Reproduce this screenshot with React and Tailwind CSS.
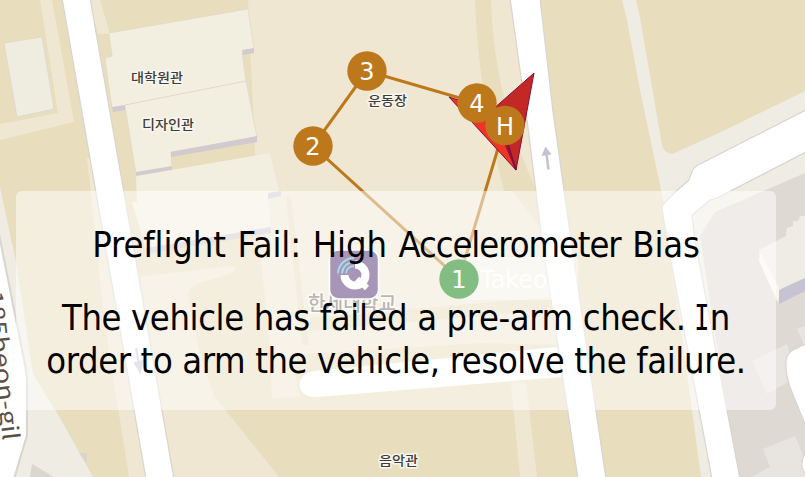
const LABEL_FONT = '"Noto Sans CJK KR", sans-serif';

function MapLabel({ x, y, width, size = 13, fill = "#3f3d3a", children }) {
  return (
    <text
      x={x}
      y={y}
      textLength={width}
      lengthAdjust="spacingAndGlyphs"
      fontSize={size}
      fontWeight="500"
      fontFamily={LABEL_FONT}
      fill={fill}
      stroke="#f8f6ee"
      strokeWidth="3"
      strokeLinejoin="round"
      paintOrder="stroke"
    >
      {children}
    </text>
  );
}

function Waypoint({ x, y, label, fill = "#bd781b" }) {
  return (
    <g>
      <circle cx={x} cy={y} r="19.7" fill={fill} />
      <text
        x={x}
        y={y + 9}
        textAnchor="middle"
        fontSize="24"
        fontFamily='"DejaVu Sans", sans-serif'
        fill="#fff"
      >
        {label}
      </text>
    </g>
  );
}

function MapCanvas() {
  return (
    <svg className="col-start-1 row-start-1 block" width="805" height="477" viewBox="0 0 805 477">
      <rect width="805" height="477" fill="#e8ddbd" />

      {/* campus footpaths and the sports field */}
      <path d="M40 0H52L74 122L0 140V124L58 113Z" fill="#efe7d2" />
      <path d="M89 0H100L110 34H98Z" fill="#efe7d2" />
      <path d="M87 158H104L133 310L173 477H129L105 325Z" fill="#efe7d2" />
      <path d="M248 0H475L508 185L550 240L557 346L481 350L272 399L271 355L259 240Z" fill="#efe7d2" />
      <path d="M286 197L291 197L309 345H302Z" fill="#e8ddbd" />
      <path d="M475 0H491Q494 100 537 191H504Q478 90 475 0Z" fill="#e8ddbd" />
      <path d="M491 0H515L547 191H537Q494 100 491 0Z" fill="#efe7d2" />
      <path d="M310 318L562 296V308L481 316L310 331Z" fill="#e8ddbd" />
      <path d="M272 399L271 356L481 343L560 345V406Z" fill="#e8ddbd" />
      <path d="M271 356L290 354L300 396L272 399Z" fill="#efe7d2" />
      <path d="M140 277L230 266Q238 267 232 273L203 282Q188 286 188 295C194 335 204 371 215 397L271 467L279 477H170L150 375Z" fill="#efe7d2" />
      <path d="M511 382H526L537 477H520Z" fill="#efe7d2" />

      {/* academic buildings */}
      <path d="M4 43L42 37L54 109L17 117Z" fill="#efece0" stroke="#ddd7ca" strokeWidth=".7" />
      <path d="M109 33L248 9L254 50L242 53L246 81L257 137L171 152L172 167L136 174L125 106L112 108L105 58L112 56Z" fill="#f3efe0" stroke="#ded8ca" strokeWidth=".7" />
      <path d="M112 107L125 105V110L113 112ZM242 50L254 48V53L243 55ZM171 152L257 136V142L171 157ZM136 172L172 166V171L136 177Z" fill="#d1cacf" />
      <path d="M125 105L246 81" stroke="#d8d1cb" strokeWidth=".8" />
      <path d="M136 176L270 153L280 195L268 198L272 232L146 250L132 202H137Z" fill="#f3efe0" />
      <path d="M268 193L281 191V196L268 199ZM146 248L271 227V233L146 254Z" fill="#d1cacf" />

      {/* eastern block */}
      <path d="M622 0H636L640 18L662 145Q664 153 672 154L719 133L805 91V477H701L664 204L640 90L627 20Z" fill="#efece3" />
      <path d="M715 212L805 173V477H737L700 236Z" fill="#dfd9d3" />
      <path d="M805 216L800 216L798 221L793 221V226L787 228L786 233L786 236L759 250L760 262L779 290L805 278Z" fill="#eeece4" />
      <path d="M760 252L780 290L778 303L759 261Z" fill="#f8f6ef" />
      <path d="M779 290L805 278V291L779 304Z" fill="#c6c3d3" />
      <path d="M752 361L787 344L795 378L767 394ZM797 329L805 326V347ZM763 449L795 436L805 460V477H751L770 467Z" fill="#e8e5e0" />

      {/* roads */}
      <g fill="#fff" stroke="#d9d4ce" strokeWidth="1.2">
        <path d="M62 -2L146 479H174L90 -2Z" />
        <path d="M510 -2L527 120L542 240L578 479H606L571 240L553 112L540 -2Z" />
        <path d="M662 208Q662 203 688 181C691 178 690 173 694 168Q697 165 702 163L808 109V151L717 198L710 200L692 215L695 240L740 479H712L667 240Z" />
        <path d="M808 343L793 350Q786 354 786 363C785 380 792 392 808 431Z" />
        <path d="M808 449Q801 456 802 468L808 479Z" />
      </g>
      <path d="M315 371L557 347L561 377L317 397C295 398 293 374 315 371Z" fill="#fff" />
      <path d="M0 187L16 262L33 374L60 418L93 477H0Z" fill="#efece3" />
      <path d="M-2 229L24 360Q27 373 27 384V435L14 479H-2Z" fill="#fff" stroke="#d9d4ce" strokeWidth="2" />
      <path d="M32 464L54 477H30Z" fill="#dcd6d0" />
      <path d="M79 453H87V464Z" fill="#dcd4c8" />
      <path d="M548.500 169.500L546.500 154" fill="none" stroke="#c6c3d0" strokeWidth="2.500" />
      <path d="M541.500 156L545.500 146.500L551.500 154.500Z" fill="#c6c3d0" />
      <path d="M136 348L139 365M135 363L140 372L143 361Z" fill="#cbc8d4" stroke="#cbc8d4" strokeWidth="2" />

      <text
        transform="translate(-14 292) rotate(83.5)"
        fontSize="23"
        textLength="150"
        lengthAdjust="spacingAndGlyphs"
        fontFamily='"Noto Sans CJK KR", sans-serif'
        fontWeight="400"
        fill="#5b5048"
      >
        185beon-gil
      </text>

      <MapLabel x="131" y="82" width="52">대학원관</MapLabel>
      <MapLabel x="142" y="129" width="52">디자인관</MapLabel>
      <MapLabel x="368" y="105" width="39">운동장</MapLabel>
      <MapLabel x="379" y="465" width="39">음악관</MapLabel>
      <MapLabel x="308" y="311" width="88" size={20} fill="#706b65">한세대학교</MapLabel>

      {/* university badge */}
      <rect x="329.5" y="250" width="49" height="49" rx="9" fill="#4f2d71" stroke="#fff" strokeWidth="1.5" />
      <path d="M355 264.500A10.500 10.500 0 1 1 344.500 275" fill="none" stroke="#fff" strokeWidth="8" />
      <path d="M357 279L367 288" stroke="#fff" strokeWidth="6" />
      <path d="M338 273.500A16 16 0 0 1 354 258M342 273.500A12 12 0 0 1 354 262M346 273.500A8 8 0 0 1 354 266" fill="none" stroke="#4cb8e0" strokeWidth="1.800" />

      {/* mission path */}
      <path d="M459 279L313 146L367 71L477 103M505 125L459 279" fill="none" stroke="#bd781b" strokeWidth="3" />

      {/* vehicle heading marker */}
      <g stroke="#80103d" strokeWidth="1" strokeLinejoin="round">
        <path d="M534 73L491 111L516 170Z" fill="#c32826" />
        <path d="M449 97L491 111L516 170Z" fill="#ef3325" />
        <path d="M505 136L516 170" strokeWidth="2" />
      </g>
      <Waypoint x={367} y={71} label="3" />
      <Waypoint x={313} y={146} label="2" />
      <Waypoint x={477} y={103} label="4" />
      <Waypoint x={505} y={125.500} label="H" />

      <rect x="459" y="257" width="119" height="43" rx="5" fill="#fff" fillOpacity=".4" />
      <text x="480" y="288" fontSize="24" textLength="84" lengthAdjust="spacingAndGlyphs" fontFamily='"DejaVu Sans", sans-serif' fill="#fff">
        Takeoff
      </text>
      <Waypoint x={459} y={279} label="1" fill="#057d05" />
    </svg>
  );
}

export default function App() {
  return (
    <main className="grid h-[477px] w-[805px] grid-cols-1 overflow-hidden bg-[#e8ddbd]">
      <MapCanvas />
      <section className="z-10 col-start-1 row-start-1 mt-[191px] ml-4 flex h-[219px] w-[760px] flex-col items-center rounded-md bg-white/50 pt-8 text-center font-['DejaVu_Sans_Condensed','DejaVu_Sans',sans-serif] text-[36px] leading-[43px] whitespace-nowrap text-black [font-stretch:condensed]">
        <h1 className="tracking-[-0.1px] [word-spacing:1.5px]">
          Preflight Fail: High <span className="tracking-[-1.05px]">Accelerometer</span> Bias
        </h1>
        <div className="mt-[30px] flex flex-col items-center tracking-[-0.37px]">
          <p className="h-[43px]">
            The vehicle has failed a pre-arm check.{" "}
            <span className="mr-[-2px] -ml-[5px] inline-block scale-x-[0.7] font-['DejaVu_Sans_Mono',monospace] leading-none">I</span>n
          </p>
          <p>order to arm the vehicle, resolve the failure.</p>
        </div>
      </section>
    </main>
  );
}
